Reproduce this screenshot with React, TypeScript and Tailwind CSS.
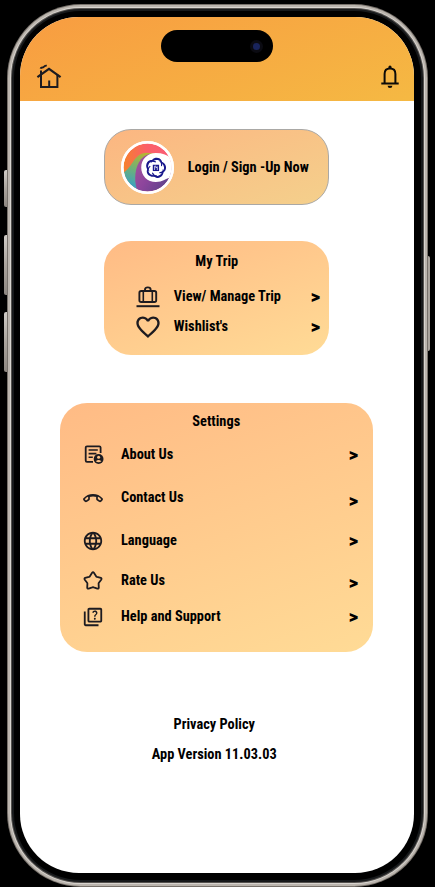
import type { ReactNode } from "react";
import { MdLanguage, MdFavoriteBorder, MdOutlineQuiz } from "react-icons/md";

const INK = "#1d1b20";

function HomeIcon() {
  return (
    <svg width="26" height="26" viewBox="0 0 26 26" fill="none" stroke={INK} strokeWidth="2">
      <path d="M1.4 13.2 13 4.8 24.6 13.2" strokeWidth="2.2" />
      <path d="M5 10.5V23H21.4V10.5M13.2 23v-6.5M5 11V6.5" />
      <path d="M4.4 4.6C5.4 2.6 6.5 4.1 7.6 3.1S9 1.5 10.8 1.7" strokeWidth="1.8" />
    </svg>
  );
}

function BellIcon() {
  return (
    <svg width="18" height="24" viewBox="0 0 18 24" fill="none" stroke="#0c0b08" strokeWidth="2">
      <path d="M.3 18.4H17.7M3.6 18V9Q3.6 3.6 9 3.6T14.4 9V18" />
      <path d="M7.4 3.4V2.2a1.6 1.6 0 0 1 3.2 0V3.4ZM6.6 20.8H11.4a2.4 2.2 0 0 1-4.8 0Z" fill="#0c0b08" stroke="none" />
    </svg>
  );
}

function LuggageIcon() {
  return (
    <svg width="24" height="22" viewBox="0 0 24 22" fill="none" stroke={INK} strokeWidth="1.9">
      <rect x="3.4" y="5" width="16.8" height="11" rx="1.8" />
      <path d="M7.3 5v11M16.3 5v11" strokeWidth="1.6" />
      <path d="M9 4.8V3.6Q9 1.4 11.8 1.4t2.8 2.2v1.2" />
      <path d="M.5 20.2H23.5" strokeWidth="2" />
    </svg>
  );
}

function AboutIcon() {
  return (
    <svg width="20" height="20" viewBox="0 0 20 20" fill="none" stroke={INK} strokeWidth="1.8">
      <path d="M9 16.9H3Q1.7 16.9 1.7 15.6V2.6Q1.7 1.3 3 1.3H15.3Q16.6 1.3 16.6 2.6V8" />
      <path d="M4.6 5h9.2M4.6 8.6h7.8M4.6 12.2h4.2" strokeWidth="1.6" />
      <circle cx="14.6" cy="14" r="4.9" fill={INK} stroke="none" />
      <circle cx="14.6" cy="12.3" r="1.5" fill="#ffc488" stroke="none" />
      <path d="M11.8 16.2Q14.6 13.8 17.4 16.2Q14.6 18.5 11.8 16.2Z" fill="#ffc488" stroke="none" />
    </svg>
  );
}

function CallIcon() {
  return (
    <svg width="20" height="10" viewBox="0 0 20 10" fill="none" stroke={INK} strokeWidth="1.7" strokeLinejoin="round">
      <path d="M1.1 5.8C5.8.4 14.2.4 18.9 5.8Q19.3 6.4 18.8 6.9L17.6 8.1Q17.1 8.5 16.4 8.1L14.5 6.8Q14.1 6.5 14 6V3.2Q10 1.9 6 3.2V6Q5.9 6.5 5.5 6.8L3.6 8.1Q2.9 8.5 2.4 8.1L1.2 6.9Q.7 6.4 1.1 5.8Z" />
    </svg>
  );
}

function StarIcon() {
  return (
    <svg width="20" height="20" viewBox="0 0 20 20" fill="none" stroke={INK} strokeWidth="1.8" strokeLinejoin="round">
      <path d="M9.1 1.8Q10 .5 10.9 1.8L13.1 5.2Q13.4 5.7 14 5.9L17.8 6.9Q19.1 7.4 18.2 8.7L15.9 11.7Q15.5 12.2 15.6 12.8L15.8 16.6Q15.8 18 14.4 17.6L10.7 16.4Q10 16.1 9.3 16.4L5.6 17.6Q4.2 18 4.2 16.6L4.4 12.8Q4.5 12.2 4.1 11.7L1.8 8.7Q.9 7.4 2.2 6.9L6 5.9Q6.6 5.7 6.9 5.2Z" />
    </svg>
  );
}

const BLADES = [8, 80, 152, 224, 296];

function Logo() {
  return (
    <svg width="53" height="53" viewBox="0 0 54 54" className="shrink-0">
      <defs>
        <clipPath id="disc"><circle cx="27" cy="27" r="24.5" /></clipPath>
        <linearGradient id="warm" x1="0" y1="0.4" x2="1" y2="0.3">
          <stop offset="0" stopColor="#f58426" /><stop offset=".5" stopColor="#fb6068" /><stop offset="1" stopColor="#fa5b77" />
        </linearGradient>
        <linearGradient id="sea" x1="0.6" y1="0" x2="0.3" y2="1">
          <stop offset="0" stopColor="#b5b534" /><stop offset=".45" stopColor="#6bb07b" /><stop offset="1" stopColor="#279be0" />
        </linearGradient>
        <linearGradient id="plum" x1="0" y1="0.2" x2="1" y2="0.9">
          <stop offset="0" stopColor="#a0529c" /><stop offset=".4" stopColor="#8d459c" /><stop offset="1" stopColor="#4e4385" />
        </linearGradient>
      </defs>
      <circle cx="27" cy="27" r="27" fill="#fff" />
      <g clipPath="url(#disc)">
        <rect width="54" height="54" fill="url(#warm)" />
        <path d="M0 34C13 27 12 13 26 12L36 13 22 54H0Z" fill="url(#sea)" />
        <path d="M18 54C11 40 14 16 30 13L54 30V54Z" fill="url(#plum)" />
        <path d="M54 20C50 15 43 12.2 35.5 12.2C27 12.2 20.6 18.5 20.6 27C20.6 35.5 27 41.8 35.5 41.8C43 41.8 47 37 54 36Z" fill="#fff" />
      </g>
      <circle cx="27" cy="27" r="25.7" fill="none" stroke="#fff" strokeWidth="2.6" />
      <g stroke="none" fill="#18188c">
        {BLADES.map((angle) => (
          <path
            key={angle}
            transform={`rotate(${angle} 35.5 27.5)`}
            d="M29.6 23.4C29.6 17.6 36.4 15.2 39.8 18.6C41.4 20.4 41.8 22.6 41.4 25L40.4 24.8C40.4 22 39.2 19.4 36.4 19.2C33.6 19 31.2 20.6 29.6 23.4Z"
          />
        ))}
      </g>
      <rect x="32.4" y="24.2" width="6.4" height="6.4" fill="#18188c" />
      <path d="M34.2 29.6v-4h1.4v2l1.4-1.4v3.4" stroke="#fff" strokeWidth=".7" fill="none" />
    </svg>
  );
}

function Row({ icon, label, arrow = "" }: { icon: ReactNode; label: string; arrow?: string }) {
  return (
    <li className="flex h-5 items-center">
      <span className="flex w-[38px] shrink-0">{icon}</span>
      <span className="flex-1 whitespace-nowrap">{label}</span>
      <span className={`origin-right scale-x-120 text-[18px] leading-5 font-black ${arrow}`}>&gt;</span>
    </li>
  );
}

export default function App() {
  return (
    <div className="flex h-[887px] w-[435px] overflow-hidden bg-black pt-1 pl-1 font-['Roboto_Condensed','Roboto',sans-serif] text-[14.35px] leading-5 font-bold text-black [font-stretch:75%]">
      <div className="flex w-[3px] shrink-0 flex-col pt-[166px]">
        <div className="h-[37px] rounded-l-xs bg-linear-to-b from-[#d0ccc7] via-[#aaa49d] to-[#8d8781]" />
        <div className="mt-7 flex flex-col gap-[17px]">
          <div className="h-[60px] rounded-l-xs bg-linear-to-b from-[#d0ccc7] via-[#aaa49d] to-[#8d8781]" />
          <div className="h-[60px] rounded-l-xs bg-linear-to-b from-[#d0ccc7] via-[#aaa49d] to-[#8d8781]" />
        </div>
      </div>
      <div className="h-[883px] w-[420.5px] shrink-0 rounded-[74px] bg-[#77716b] p-px">
        <div className="h-full rounded-[73px] bg-[#bbb5ae] p-[2px]">
          <div className="h-full rounded-[71px] bg-[#d8d4cf] p-px">
            <div className="h-full rounded-[70px] bg-[#55524f] p-px">
              <div className="h-full rounded-[69px] bg-[#17191b] p-[2px]">
                <div className="h-full rounded-[67px] bg-black pt-[6px] pl-[6px]">
                  <div className="flex h-[856px] w-[393.5px] flex-col overflow-hidden rounded-[59px] bg-white">
                    <header className="flex h-[84px] shrink-0 flex-col items-center bg-linear-[160deg,#f89c41,#f5b943] pt-[13px]">
                      <div className="flex h-8 w-[112px] shrink-0 items-center justify-end rounded-full bg-black pr-[10px]">
                        <div className="flex size-[13px] items-center justify-center rounded-full bg-[#0b0b12]">
                          <div className="size-[7px] rounded-full bg-[#19245c]" />
                        </div>
                      </div>
                      <div className="flex w-full items-center justify-between pt-0.5 pr-[15px] pl-4">
                        <HomeIcon />
                        <BellIcon />
                      </div>
                    </header>
                    <main className="flex flex-col items-center pr-px pt-[28px]">
                      <section className="flex h-[76px] w-[225px] items-center gap-[14px] rounded-[27px] border border-[#aaa8a5] bg-linear-[160deg,#fcb681,#f4d08c] pl-4">
                        <Logo />
                        <span className="pt-px whitespace-nowrap">Login / Sign -Up Now</span>
                      </section>
                      <section className="mt-9 flex h-[114px] w-[225px] flex-col gap-[15.5px] rounded-[27px] bg-linear-[160deg,#ffbb85,#ffdb96] pt-[10.5px]">
                        <h2 className="pl-px text-center">My Trip</h2>
                        <ul className="flex flex-col gap-[10px] pr-[9px] pl-8">
                          <Row icon={<LuggageIcon />} label="View/ Manage Trip" />
                          <Row icon={<MdFavoriteBorder size={28} color={INK} className="-mx-0.5" />} label="Wishlist's" />
                        </ul>
                      </section>
                      <section className="mt-12 flex h-[249px] w-[313.5px] flex-col gap-[13px] rounded-[27px] bg-linear-[160deg,#ffbb85,#ffdb96] pt-[9px]">
                        <h2 className="text-center">Settings</h2>
                        <ul className="grid grid-rows-[43px_43px_40px_36px_20px] pr-[15px] pl-[23.5px]">
                          <Row icon={<span className="pl-px"><AboutIcon /></span>} label="About Us" />
                          <Row icon={<CallIcon />} label="Contact Us" arrow="pt-[6px]" />
                          <Row icon={<MdLanguage size={22} color={INK} className="-mx-px" />} label="Language" />
                          <Row icon={<StarIcon />} label="Rate Us" arrow="pt-1" />
                          <Row icon={<MdOutlineQuiz size={22} color={INK} className="-mx-px" />} label="Help and Support" />
                        </ul>
                      </section>
                    </main>
                    <footer className="flex flex-col gap-[10px] pt-[62.5px] pr-[5px] text-center">
                      <p>Privacy Policy</p>
                      <p>App Version 11.03.03</p>
                    </footer>
                  </div>
                </div>
              </div>
            </div>
          </div>
        </div>
      </div>
      <div className="w-[2px] shrink-0 pt-[252px]">
        <div className="h-[95px] rounded-r-xs bg-[#aaa49d]" />
      </div>
    </div>
  );
}
